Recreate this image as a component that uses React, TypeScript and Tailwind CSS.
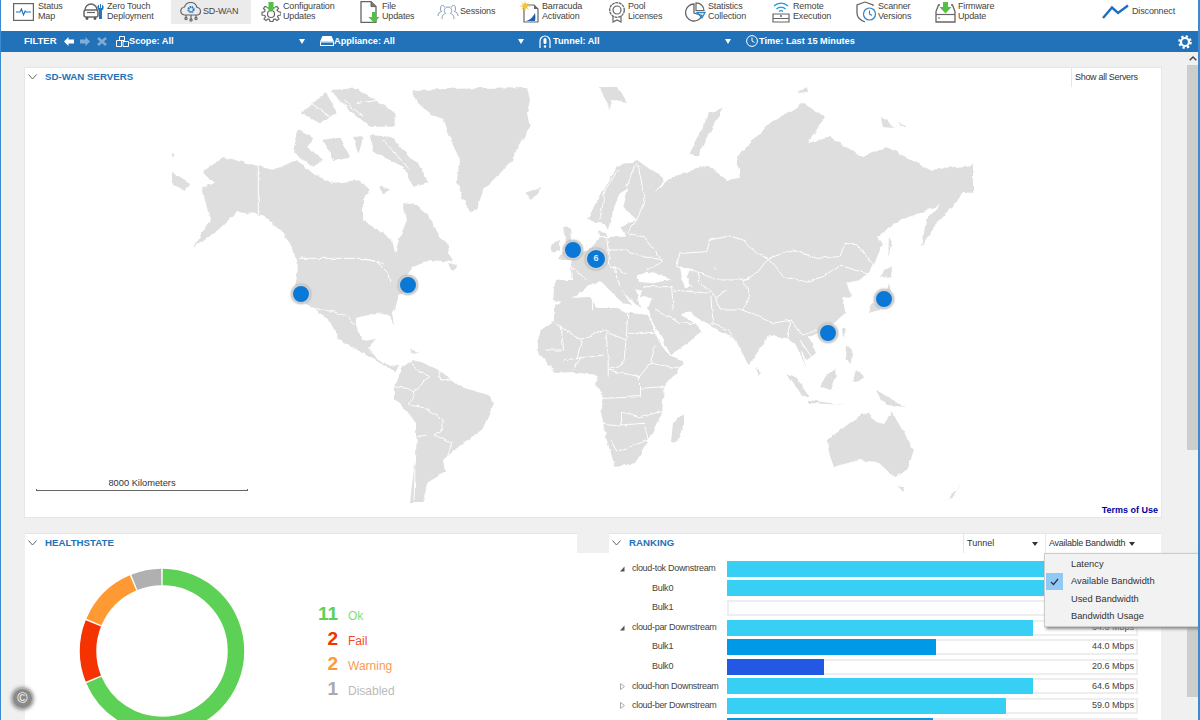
import type { ReactNode } from 'react';

/* ---------- toolbar icons ---------- */

const S = { fill: 'none', stroke: '#666', strokeWidth: 1.2 };

function StatusIcon() {
  return (
    <svg width="21" height="18" viewBox="0 0 21 18">
      <rect x="0.6" y="0.6" width="19.8" height="16.8" {...S} />
      <path d="M3 9h4l1.5-3 2 6 1.6-4 .9 1H18" fill="none" stroke="#2272b9" strokeWidth="1.1" />
    </svg>
  );
}

function RobotIcon() {
  return (
    <svg width="22" height="18" viewBox="0 0 22 18">
      <path d="M2 7a6 6 0 0 1 12 0" {...S} strokeWidth={1.5} />
      <rect x="1" y="7" width="14" height="7" rx="2" {...S} strokeWidth={1.5} />
      <path d="M4 9.5h8" {...S} />
      <circle cx="4" cy="15.5" r="1.4" fill="#555" />
      <circle cx="12" cy="15.5" r="1.4" fill="#555" />
      <path d="M17 1v4h-1V1.5a3.5 3.5 0 0 0 0 6V16h3V7.5a3.5 3.5 0 0 0 0-6V5h-1V1z" fill="#1f78c1" />
    </svg>
  );
}

function CloudIcon() {
  return (
    <svg width="24" height="20" viewBox="0 0 24 20">
      <path d="M6 13a4 4 0 0 1-.5-8A6.500 6.500 0 0 1 18 5.500 3.800 3.800 0 0 1 18.500 13z" {...S} />
      <circle cx="12" cy="7.500" r="2.600" fill="none" stroke="#1f78c1" strokeWidth="2" strokeDasharray="1.500 .6" />
      <circle cx="12" cy="7.500" r="1" fill="#ebebeb" />
      <path d="M12 13v4M7 13v2.500M17 13v2.500" {...S} />
      <circle cx="12" cy="18" r="1.100" {...S} />
      <circle cx="7" cy="16.500" r="1.100" {...S} />
      <circle cx="17" cy="16.500" r="1.100" {...S} />
    </svg>
  );
}

function ConfigIcon() {
  return (
    <svg width="20" height="20" viewBox="0 0 20 20">
      <path
        d="M6 5l-2-.5-1.500 2L4 8l-.2 1.500L1 10.500v2.500l2.800.5.700 1.500-1.500 2 2 1.500 2-1.500 1.500.5.500 2h3l.5-2 1.500-.5 2 1.500 2-1.500-1.500-2 .7-1.500 2.800-.5v-2.500l-2.800-1L16 8l1.500-1.500L16 4.500 14 5"
        {...S}
      />
      <circle cx="10" cy="12" r="3.500" {...S} />
      <path d="M7.500 0h5v5H15l-5 5-5-5h2.500z" fill="#4fc23f" />
    </svg>
  );
}

function FileIcon() {
  return (
    <svg width="20" height="22" viewBox="0 0 20 22">
      <path d="M1 .6h10l5 5v15.800H1z" {...S} strokeWidth={1.3} />
      <path d="M11 .6v5h5" fill="#777" stroke="#666" />
      <path d="M12 11h4v5h3.500L14 22l-5.500-6H12z" fill="#4fc23f" />
    </svg>
  );
}

function SessionsIcon() {
  return (
    <svg width="22" height="16" viewBox="0 0 22 16">
      <g fill="none" stroke="#7d9cb8" strokeWidth="1">
        <path d="M1 12c0-3 2-4 3.500-4.500C3 6 3 1.500 5.500 1.500c1.500 0 2 1 2.200 2" />
        <path d="M21 12c0-3-2-4-3.500-4.500C19 6 19 1.500 16.500 1.500c-1.500 0-2 1-2.200 2" />
        <path d="M5 15c0-4 2-5 3.500-5.500-2-2-1.500-6.500 2.500-6.500s4.500 4.500 2.500 6.500C15 10 17 11 17 15" />
      </g>
    </svg>
  );
}

function BarracudaIcon() {
  return (
    <svg width="22" height="22" viewBox="0 0 22 22">
      <path d="M5 4h10l4 4v13H5z" {...S} />
      <path d="M15 4v4h4" fill="#666" />
      <path d="M6 0v10M1 5h10M2.500 1.500l7 7M9.500 1.500l-7 7" stroke="#f5c33b" strokeWidth=".8" />
      <circle cx="6" cy="5" r="2.700" fill="#f5c33b" />
      <path d="M7 20c4-1 7-4 9-8 .5 3 .5 6 0 8z" fill="#1f5fb0" />
    </svg>
  );
}

function PoolIcon() {
  return (
    <svg width="18" height="21" viewBox="0 0 18 21">
      <circle cx="9" cy="8" r="7.300" fill="none" stroke="#666" strokeWidth="1.300" strokeDasharray="3 .6" />
      <circle cx="9" cy="8" r="4" {...S} />
      <path d="M5 14v6l4-2 4 2v-6" {...S} />
    </svg>
  );
}

function StatsIcon() {
  return (
    <svg width="21" height="20" viewBox="0 0 21 20">
      <path d="M9 2a8.500 8.500 0 1 0 8 11.500L9 11z" {...S} strokeWidth={1.3} />
      <path d="M11 .8a8 8 0 0 1 8 7.700h-8z" {...S} />
      <path d="M12 10.500h8l-3 5.500z" fill="none" stroke="#2b8ad0" strokeWidth="1.300" />
    </svg>
  );
}

function RemoteIcon() {
  return (
    <svg width="18" height="22" viewBox="0 0 18 22">
      <g fill="none" stroke="#1f9bd7" strokeWidth="1.300">
        <path d="M2 5a10 10 0 0 1 14 0" />
        <path d="M4.500 8a6.500 6.500 0 0 1 9 0" />
        <path d="M7 10.500a3 3 0 0 1 4 0" />
      </g>
      <path d="M1 13h16v8H1zM1 17.500h16" {...S} />
      <circle cx="9" cy="15" r="1" fill="#666" />
    </svg>
  );
}

function ScannerIcon() {
  return (
    <svg width="21" height="22" viewBox="0 0 21 22">
      <path d="M9 1L1 4v8c0 4 3 7 8 9" {...S} strokeWidth={1.3} />
      <path d="M9 1l8 3v1" {...S} strokeWidth={1.3} />
      <circle cx="13.500" cy="13" r="6" fill="#fff" stroke="#2b7fc4" strokeWidth="1.200" />
      <path d="M13.500 9.500V13l2.500 1.500" fill="none" stroke="#2b7fc4" strokeWidth="1.100" />
    </svg>
  );
}

function FirmwareIcon() {
  return (
    <svg width="21" height="21" viewBox="0 0 21 21">
      <path d="M5 3H3.500L1 9.500V20h19V9.500L17.500 3H16" {...S} strokeWidth={1.3} />
      <path d="M1 12.500h19" {...S} />
      <circle cx="4" cy="16" r=".8" fill="#555" />
      <path d="M8 0h5v5h3.500l-6 6.500-6-6.500H8z" fill="#4fc23f" />
    </svg>
  );
}

function DisconnectIcon() {
  return (
    <svg width="27" height="16" viewBox="0 0 27 16">
      <path d="M1 14L10 3.500 16 9 26 1.500" fill="none" stroke="#1f6fc0" strokeWidth="2.400" />
    </svg>
  );
}

interface ToolItem {
  cell: string;
  icon: ReactNode;
  lines: string[];
}

const tools: ToolItem[] = [
  { cell: 'w-[70px] gap-[4px]', icon: <StatusIcon />, lines: ['Status', 'Map'] },
  { cell: 'w-[88px] gap-[2px]', icon: <RobotIcon />, lines: ['Zero Touch', 'Deployment'] },
  { cell: 'w-[80px] pl-[8px] mr-[10px] bg-[#ebebeb]', icon: <CloudIcon />, lines: ['SD-WAN'] },
  { cell: 'w-[99px] gap-[2px]', icon: <ConfigIcon />, lines: ['Configuration', 'Updates'] },
  { cell: 'w-[77px] gap-[2px]', icon: <FileIcon />, lines: ['File', 'Updates'] },
  { cell: 'w-[82px] gap-[1px]', icon: <SessionsIcon />, lines: ['Sessions'] },
  { cell: 'w-[89px] gap-[1px]', icon: <BarracudaIcon />, lines: ['Barracuda', 'Activation'] },
  { cell: 'w-[77px] gap-[2px]', icon: <PoolIcon />, lines: ['Pool', 'Licenses'] },
  { cell: 'w-[87px] gap-[2px]', icon: <StatsIcon />, lines: ['Statistics', 'Collection'] },
  { cell: 'w-[84px] gap-[3px]', icon: <RemoteIcon />, lines: ['Remote', 'Execution'] },
  { cell: 'w-[79px] gap-[1px]', icon: <ScannerIcon />, lines: ['Scanner', 'Versions'] },
  { cell: 'w-[167px] gap-[2px]', icon: <FirmwareIcon />, lines: ['Firmware', 'Update'] },
  { cell: 'gap-[3px]', icon: <DisconnectIcon />, lines: ['Disconnect'] },
];

function Toolbar() {
  return (
    <div className="flex h-[31px] shrink-0 items-start bg-white pl-[12px]">
      {tools.map((tool) => (
        <div key={tool.lines[0]} className={`flex h-[24px] shrink-0 items-center ${tool.cell}`}>
          {tool.icon}
          <div className="-mt-[3px] text-[9px] leading-[10px] tracking-[-0.15px] text-[#444]">
            {tool.lines.map((line) => (
              <div key={line}>{line}</div>
            ))}
          </div>
        </div>
      ))}
    </div>
  );
}

/* ---------- filter bar ---------- */

function Caret() {
  return <div className="ml-auto h-0 w-0 border-x-[3px] border-t-[5px] border-x-transparent border-t-white" />;
}

function Gear() {
  return (
    <svg className="ml-auto mr-[6px]" width="14" height="14" viewBox="0 0 14 14" fill="none" stroke="#fff">
      <circle cx="7" cy="7" r="4" strokeWidth="2.200" />
      <circle cx="7" cy="7" r="5.700" strokeWidth="2.200" strokeDasharray="2.300 2.170" />
    </svg>
  );
}

function FilterBar() {
  return (
    <div className="flex h-[21px] shrink-0 items-center bg-[#2272b9] pl-[23px] text-[9.2px] font-bold text-white">
      <div className="w-[40px] text-[9.500px]">FILTER</div>
      <svg className="mr-[6px]" width="10" height="9" viewBox="0 0 10 9">
        <path d="M0 4.500L4.500 0v2.500H10v4H4.500V9z" fill="#fff" />
      </svg>
      <svg className="mr-[7px]" width="10" height="9" viewBox="0 0 10 9">
        <path d="M10 4.500L5.500 0v2.500H0v4h5.500V9z" fill="#7fadd6" />
      </svg>
      <svg className="mr-[9px]" width="10" height="9" viewBox="0 0 10 9">
        <path d="M1 1l8 7M9 1L1 8" stroke="#7fadd6" strokeWidth="2.400" />
      </svg>
      <div className="flex w-[204px] items-center pr-[15px]">
        <svg width="13" height="11" viewBox="0 0 13 11" fill="none" stroke="#fff">
          <path d="M3.500.5h5v4h-5zM.5 4.500h5v6h-5zM7 5.500h5.500v5H7z" />
        </svg>
        <span>Scope: All</span>
        <Caret />
      </div>
      <div className="flex w-[219px] items-center pr-[15px]">
        <svg width="14" height="10" viewBox="0 0 14 10">
          <path d="M2.500 0h9L14 5.500H0z" fill="#fff" />
          <rect x=".5" y="6" width="13" height="3.500" fill="none" stroke="#fff" />
        </svg>
        <span>Appliance: All</span>
        <Caret />
      </div>
      <div className="flex w-[207px] items-center pr-[15px]">
        <svg className="mr-[2px]" width="12" height="14" viewBox="0 0 12 14" fill="none" stroke="#fff" strokeWidth="1.200">
          <path d="M1 13V6a5 5 0 0 1 10 0v7" />
          <rect x="4.500" y="3" width="3" height="6" rx="1.500" fill="#fff" stroke="none" />
          <circle cx="6" cy="11.500" r="1.200" fill="#fff" stroke="none" />
        </svg>
        <span>Tunnel: All</span>
        <Caret />
      </div>
      <div className="flex items-center">
        <svg className="mr-[1px]" width="12" height="12" viewBox="0 0 12 12" fill="none" stroke="#fff">
          <circle cx="6" cy="6" r="5.400" />
          <path d="M6 2.500V6l2.500 1.500" />
        </svg>
        <span>Time: Last 15 Minutes</span>
      </div>
      <Gear />
    </div>
  );
}

/* ---------- world map, coordinates are page pixels unless a group says otherwise ---------- */

const LAND = '#dedede';

const land = [
  // North and Central America
  'M203 172L223 157 258 166 273 170 297 160 315 175 333 183 360 180 370 190 363 200 363 220 383 233 392 240 395 253 400 237 407 220 403 203 417 205 428 215 440 237 447 243 452 262 430 260 413 267 405 278 417 280 398 297 398 300 392 313 394 325 389 315 376 313 356 318 356 325 363 340 376 338 369 348 378 360 394 367 400 365 394 371 380 363 340 340 331 323 314 308 293 295 297 277 298 260 283 233 263 215 237 212 218 230 193 247 210 220 202 187 215 183z',
  'M448 263L458 265 452 272z',
  // South America
  'M412 360L403 367 394 387 394 397 416 423 416 453 410 502 423 502 427 483 445 472 443 460 463 443 483 428 494 403 488 395 461 387 439 370 421 362z',
  // Africa
  'M537 343L541 330 555 320 555 305 568 298 590 297 597 308 617 308 630 313 648 315 657 337 668 355 682 360 684 363 664 387 662 413 648 440 635 463 615 467 606 437 601 413 604 397 595 383 599 375 572 372 555 373 537 350z',
  // Madagascar
  'M684 413L673 423 671 442 677 442 684 423z',
  // Australia, Tasmania, New Zealand
  'M827 440L854 420 867 412 876 422 884 424 892 412 914 450 907 470 894 477 878 462 858 460 834 467 829 453z',
  'M898 487L904 487 902 492z',
  'M947 500L958 488 960 482 954 496z',
  // Greenland, Iceland
  'M412 90L527 87 530 100 527 113 530 127 520 143 512 160 500 173 483 190 477 210 470 212 462 197 457 180 460 160 452 143 443 120 430 113 417 103z',
  'M525 193L540 187 538 195 530 199z',
  // Eurasia
  'M587 220L602 193 617 167 637 160 665 180 653 193 673 177 707 165 727 180 740 178 737 157 770 123 803 103 825 117 808 143 830 137 863 157 887 147 930 170 973 165 973 193 963 192 953 207 935 225 922 247 926 220 940 205 915 215 900 220 877 237 883 243 873 267 860 280 846 283 852 297 843 298 845 313 827 330 809 337 816 353 807 360 800 350 808 372 796 345 789 340 769 335 749 365 733 337 712 327 690 312 681 314 695 324 702 332 671 355 653 323 648 308 652 298 640 297 642 290 636 288 640 308 625 295 617 285 632 305 622 303 600 280 590 285 577 295 565 303 553 300 555 280 573 280 570 268 572 260 590 248 600 237 598 225z',
  // UK, Ireland
  'M563 227L570 228 573 260 558 260 567 247z',
  'M553 243L560 240 560 250 551 252z',
  // Sakhalin, Japan
  'M889 238L892 240 888 258z',
  'M884 270L892 266 891 278 881 277z',
  'M889 284L892 296 880 310 868 313 870 306 885 298z',
  // South East Asia
  'M787 373L797 378 809 397 803 397z',
  'M820 387L831 390 836 377 835 368 827 375z',
  'M809 400L845 405 809 403z',
  'M876 390L905 407 887 405 880 398z',
  'M847 345L852 350 851 365 846 358z',
  'M856 370L864 378 853 382z',
  'M757 367L761 373 757 376z',
  'M842 328L846 330 843 338z',
  // Caribbean
  'M384 343L405 347 395 345z',
  'M411 350L421 352 411 353z',
  // Svalbard, Novaya Zemlya, Arctic Russia
  'M600 87L618 87 627 102 612 100 610 110z',
  'M723 108L710 112 690 153 697 157 707 137z',
  'M797 93L807 87 808 92z',
  'M880 118L888 120 894 128 882 127z',
  'M898 123L908 127 901 127z',
  // Aleutian side of Chukotka
  'M172 172L190 183 186 190 172 185z',
  'M172 153L176 155 172 157z',
];

// Canadian Arctic, drawn in the scale of a 3x crop of (150,80)
const arctic = [
  'M455 100L500 60 530 40 560 100 510 130z',
  'M540 30L620 25 740 100 730 140 660 140 600 90z',
  'M430 210L445 150 490 175 470 200 520 240 490 260 450 235z',
  'M520 180L570 170 600 230 550 240z',
  'M610 170L640 170 625 225z',
  'M660 165L720 170 810 260 835 310 790 320 760 260 700 230 670 210z',
  'M690 175L700 225 720 230 700 190z',
  'M690 320L720 325 700 345z',
];

// white channels through the Arctic islands, same scale
const channels = [
  'M470 60L540 110 520 150',
  'M580 60L640 110',
  'M620 70L690 60',
  'M700 180L780 270',
  'M480 270L550 300 620 280',
  'M560 260L545 315',
  'M640 350L680 330 700 360',
];

// borders in the scale of the (150,80) crop
const naBorders = ['M325 258V405', 'M450 535H630L680 545 715 580 720 605', 'M640 535L700 550'];

// borders in the scale of the (530,80) crop
const asiaBorders = [
  'M450 520L530 515 540 480 600 468 640 480 680 520 715 535',
  'M715 535L790 510 860 535 930 530 945 490 985 495 1030 550 1020 585 930 555 880 590 830 605 760 590 735 560 715 535',
  'M715 535L680 580 640 600 660 650 640 690',
  'M450 520L440 560 500 575 560 600 610 600 660 595',
  'M505 575L510 610 560 650 590 630',
  'M265 270L225 330 210 420',
  'M320 250L290 320',
  'M325 255L345 365 320 420',
  'M320 420L290 460 340 470 400 545 350 570',
  'M230 510L290 510 340 530 400 540',
  'M230 470L240 560 290 580',
  'M340 620L430 620',
  'M425 620L430 690',
  'M560 650L570 690 620 690',
  'M430 630L540 640',
  'M130 590L125 560 170 600',
  'M250 560L270 620',
  'M180 470L240 470',
];

const asiaCuts = [
  'M320 590L350 575 400 585 420 600 370 610 325 605z',
  'M450 555L480 570 470 590 485 620 465 625 455 590z',
  'M230 470L245 400 270 340 295 325 280 380 320 420 270 440 290 470z',
  'M553 562L558 565 554 570z',
  'M170 420L225 430 240 470 190 440z',
];

// borders in the scale of the (260,280) crop, which is stretched 2.24 by 3
const southBorders = [
  'M120 85L165 95 195 110 215 135',
  'M340 240L345 265 380 290 345 335 335 375 375 385 410 420 410 445 390 465 430 490 420 530',
  'M300 320L330 325 345 335',
  'M350 470L345 660',
  'M370 465L355 470',
  'M400 265L405 300 440 295 445 320',
  'M660 130L720 180 765 150 820 180 825 75',
  'M825 160H890',
  'M720 180L710 240',
  'M640 210H680L675 140',
  'M680 240L770 225',
  'M775 160L780 225 780 290',
  'M820 180L815 250 780 270 850 290 850 350 770 355',
  'M885 195L875 250 850 290',
  'M875 250L940 265',
  'M905 320L850 325',
  'M765 430L810 435 860 430 870 480 800 515 785 480',
  'M810 435V395L850 410 900 395',
  'M640 250L660 270',
  'M720 230L700 270',
  'M1070 85L1100 100 1150 130 1190 120 1180 175',
  'M1190 120L1215 165 1250 150',
  'M1210 180L1235 230',
  'M885 90L940 130 1000 130',
  'M1010 130L1050 150 1060 170',
  'M1010 50L1015 130',
  'M745 50V90',
];

function WorldMap() {
  return (
    <svg className="block" width="1136" height="430" viewBox="25 87 1136 430">
      <defs>
        {/* roughens the hand-placed coastlines */}
        <filter id="coast" x="25" y="87" width="1136" height="430" filterUnits="userSpaceOnUse">
          <feTurbulence type="fractalNoise" baseFrequency="0.14" numOctaves="2" seed="4" result="noise" />
          <feDisplacementMap in="SourceGraphic" in2="noise" scale="4" xChannelSelector="R" yChannelSelector="G" />
          <feGaussianBlur stdDeviation="0.3" />
        </filter>
      </defs>
      <g filter="url(#coast)">
        <rect x="25" y="87" width="1136" height="430" fill="#fff" />
        <g fill={LAND}>
          {land.map((d) => (
            <path key={d} d={d} />
          ))}
          <g transform="translate(150 80) scale(.3333)">
            {arctic.map((d) => (
              <path key={d} d={d} />
            ))}
          </g>
        </g>
        <g fill="#fff" transform="translate(530 80) scale(.3333)">
          {asiaCuts.map((d) => (
            <path key={d} d={d} />
          ))}
        </g>
        <g fill="none" stroke="#fff" strokeWidth="1">
          <g transform="translate(150 80) scale(.3333)">
            {channels.concat(naBorders).map((d) => (
              <path key={d} d={d} vectorEffect="non-scaling-stroke" />
            ))}
          </g>
          <g transform="translate(530 80) scale(.3333)">
            {asiaBorders.map((d) => (
              <path key={d} d={d} vectorEffect="non-scaling-stroke" />
            ))}
          </g>
          <g transform="translate(260 280) scale(.4464 .3333)">
            {southBorders.map((d) => (
              <path key={d} d={d} vectorEffect="non-scaling-stroke" />
            ))}
          </g>
        </g>
      </g>
    </svg>
  );
}

const pins = [
  'left-[266px] top-[197px] h-[20px] w-[20px]',
  'left-[373px] top-[188px] h-[20px] w-[20px]',
  'left-[538px] top-[153px] h-[20px] w-[20px]',
  'left-[793px] top-[236px] h-[20px] w-[20px]',
  'left-[849px] top-[202px] h-[20px] w-[20px]',
];

function Chevron() {
  return (
    <svg className="ml-[3px] mr-[8px]" width="9" height="6" viewBox="0 0 9 6">
      <path d="M.5.5l4 4.500 4-4.500" fill="none" stroke="#666" strokeWidth="1" />
    </svg>
  );
}

function PanelTitle({ children }: { children: ReactNode }) {
  return (
    <div className="flex items-center text-[9.700px] font-bold text-[#2272b9]">
      <Chevron />
      {children}
    </div>
  );
}

function MapPanel() {
  return (
    <section className="h-[449px] w-[1136px] shrink-0 bg-white shadow-[0_0_0_1px_#e6e6e6]">
      <div className="flex h-[19px] items-center justify-between">
        <PanelTitle>SD-WAN SERVERS</PanelTitle>
        <div className="flex h-full w-[90px] items-center border-l border-[#e6e6e6] pl-[3px] text-[9px] tracking-[-0.3px] text-[#333]">
          Show all Servers
        </div>
      </div>
      <div className="relative">
        <WorldMap />
        {pins.map((pin) => (
          <div
            key={pin}
            className={`absolute rounded-full border-[2px] border-[#cfcfcf] bg-[#0a78d6] shadow-[0_0_2px_#999] ${pin}`}
          />
        ))}
        <div className="absolute left-[560px] top-[161px] flex h-[22px] w-[22px] items-center justify-center rounded-full border-[2px] border-[#cfcfcf] bg-[#0a78d6] text-[9px] font-bold text-[#dcecff] shadow-[0_0_2px_#999]">
          6
        </div>
        <div className="absolute left-[11px] top-[390px] w-[212px] text-center text-[9.300px] leading-[12px] text-[#333]">
          8000 Kilometers
          <div className="h-[2px] border-x border-b border-[#666]" />
        </div>
        <div className="absolute right-[3px] top-[417px] text-[9px] font-bold leading-[12px] text-[#0000a0]">
          Terms of Use
        </div>
      </div>
    </section>
  );
}

/* ---------- healthstate ---------- */

const health = [
  { n: '11', label: 'Ok', num: 'text-[#5cd155]', text: 'text-[#7fe07a]' },
  { n: '2', label: 'Fail', num: 'text-[#f53300]', text: 'text-[#f54a2a]' },
  { n: '2', label: 'Warning', num: 'text-[#ff9933]', text: 'text-[#ff9a4d]' },
  { n: '1', label: 'Disabled', num: 'text-[#aaaaaa]', text: 'text-[#bbbbbb]' },
];

const slices = [
  { color: '#5cd155', from: 0, to: 11 },
  { color: '#f53300', from: 11, to: 13 },
  { color: '#ff9933', from: 13, to: 15 },
  { color: '#b0b0b0', from: 15, to: 16 },
];

function Donut() {
  return (
    <svg width="168" height="168" viewBox="0 0 168 168" className="-rotate-90">
      {slices.map((s) => (
        <circle
          key={s.color}
          cx="84"
          cy="84"
          r="74"
          fill="none"
          stroke={s.color}
          strokeWidth="16.500"
          pathLength={1600}
          strokeDasharray={`${(s.to - s.from) * 100 - 5} ${1600 - (s.to - s.from) * 100 + 5}`}
          strokeDashoffset={-s.from * 100 - 2.5}
        />
      ))}
    </svg>
  );
}

function HealthBody() {
  return (
    <div className="flex w-[552px] shrink-0 items-start pl-[53px] pt-[14px]">
      <Donut />
      <div className="ml-[69px] mt-[34px]">
        {health.map((h) => (
          <div key={h.label} className="flex h-[25px] items-center">
            <span className={`w-[23px] text-right text-[19px] font-bold leading-none ${h.num}`}>{h.n}</span>
            <span className={`ml-[10px] mt-[4px] text-[12px] ${h.text}`}>{h.label}</span>
          </div>
        ))}
      </div>
    </div>
  );
}

/* ---------- ranking ---------- */

interface RankRow {
  label: string;
  kind: 'open' | 'closed' | 'child';
  fill: string;
  value: string;
}

const CYAN = 'bg-[#38cff5]';

const rows: RankRow[] = [
  { label: 'cloud-tok Downstream', kind: 'open', fill: `w-[409px] ${CYAN}`, value: '' },
  { label: 'Bulk 0', kind: 'child', fill: `w-[409px] ${CYAN}`, value: '' },
  { label: 'Bulk 1', kind: 'child', fill: 'w-0', value: '' },
  { label: 'cloud-par Downstream', kind: 'open', fill: `w-[306px] ${CYAN}`, value: '64.6 Mbps' },
  { label: 'Bulk 1', kind: 'child', fill: 'w-[209px] bg-[#0099e8]', value: '44.0 Mbps' },
  { label: 'Bulk 0', kind: 'child', fill: 'w-[97px] bg-[#2258e4]', value: '20.6 Mbps' },
  { label: 'cloud-hon Downstream', kind: 'closed', fill: `w-[306px] ${CYAN}`, value: '64.6 Mbps' },
  { label: 'cloud-ber Downstream', kind: 'closed', fill: `w-[279px] ${CYAN}`, value: '59.0 Mbps' },
  { label: '', kind: 'child', fill: 'w-[206px] bg-[#0099e8]', value: '' },
];

function Arrow({ kind }: { kind: RankRow['kind'] }) {
  if (kind === 'child') return <div className="w-[33px]" />;
  return (
    <svg className="ml-[11px] mr-[7px]" width="5" height="7" viewBox="0 0 5 7">
      {kind === 'open' ? (
        <path d="M4.500 1.500v5h-4.500z" fill="#555" />
      ) : (
        <path d="M.5.5l4 3-4 3z" fill="none" stroke="#aaa" />
      )}
    </svg>
  );
}

const menuItems = ['Latency', 'Available Bandwidth', 'Used Bandwidth', 'Bandwidth Usage'];

function RankBody() {
  return (
    <div className="relative w-[552px] shrink-0 pt-[6px] text-[9px] text-[#444]">
      {rows.map((row, idx) => (
        <div key={idx} className="flex h-[19.600px] items-center">
          <div className={`flex w-[118px] shrink-0 items-center ${row.kind === 'child' ? 'pl-[10px] [word-spacing:-2px]' : ''}`}>
            <Arrow kind={row.kind} />
            <span className="whitespace-nowrap tracking-[-0.3px]">{row.label}</span>
          </div>
          <div className="flex h-[16px] w-[411px] shrink-0 items-center justify-between border-[2px] border-[#eeeeee] bg-white pr-[2px]">
            <div className={`-my-[2px] -ml-[2px] h-[16px] ${row.fill}`} />
            <span>{row.value}</span>
          </div>
        </div>
      ))}
      <div className="absolute left-[435px] top-0 h-[74px] w-[155px] border border-[#cccccc] bg-[#f2f2f2] py-[2px] shadow-[2px_2px_3px_#888]">
        {menuItems.map((item) => (
          <div key={item} className="relative h-[17.300px] pl-[26px] text-[9.300px] leading-[17px] text-[#333]">
            {item === 'Available Bandwidth' && (
              <div className="absolute left-[1px] top-0 flex h-[17px] w-[17px] items-center justify-center bg-[#90c8f6]">
                <svg width="9" height="8" viewBox="0 0 9 8">
                  <path d="M1 4l2.500 2.500L8 1" fill="none" stroke="#333" strokeWidth="1.200" />
                </svg>
              </div>
            )}
            {item}
          </div>
        ))}
      </div>
    </div>
  );
}

function SmallCaret() {
  return <div className="h-0 w-0 border-x-[3px] border-t-[4px] border-x-transparent border-t-[#333]" />;
}

function LowerPanels() {
  return (
    <section className="mt-[17px] w-[1136px] shrink-0">
      <div className="flex h-[19px] gap-[32px]">
        <div className="flex w-[552px] items-center bg-white shadow-[0_-1px_0_#e6e6e6]">
          <PanelTitle>HEALTHSTATE</PanelTitle>
        </div>
        <div className="flex w-[552px] items-center bg-white shadow-[0_-1px_0_#e6e6e6]">
          <PanelTitle>RANKING</PanelTitle>
          <div className="ml-auto flex h-full w-[83px] items-center justify-between border-x border-[#e6e6e6] pl-[3px] pr-[7px] text-[9px] text-[#333]">
            Tunnel
            <SmallCaret />
          </div>
          <div className="flex h-full w-[115px] items-center gap-[4px] pl-[3px] text-[9px] tracking-[-0.25px] text-[#333]">
            Available Bandwidth
            <SmallCaret />
          </div>
        </div>
      </div>
      <div className="flex gap-[32px] bg-white">
        <HealthBody />
        <RankBody />
      </div>
    </section>
  );
}

function Scrollbar() {
  return (
    <div className="ml-[26px] w-[11px] shrink-0">
      <div className="flex h-[13px] items-center justify-center">
        <svg width="8" height="5" viewBox="0 0 8 5">
          <path d="M.7 4.300L4 1l3.300 3.300" fill="none" stroke="#444" strokeWidth="1.400" />
        </svg>
      </div>
      <div className="h-[385px] bg-[#cdcdcd]" />
      <div className="h-[103px]" />
      <div className="h-[144px] bg-[#cdcdcd]" />
    </div>
  );
}

export default function App() {
  return (
    <div className="relative flex h-[720px] w-[1200px] flex-col overflow-hidden border-l border-r-2 border-[#3d8ad0] bg-[#f0f0f0] font-['Liberation_Sans',Arial,sans-serif]">
      <Toolbar />
      <FilterBar />
      <main className="flex flex-1 pl-[24px]">
        <div className="flex flex-col pt-[16px]">
          <MapPanel />
          <LowerPanels />
        </div>
        <Scrollbar />
      </main>
      <div className="absolute left-[11px] top-[688px] flex h-[21px] w-[21px] items-center justify-center rounded-full border border-[#bbb] bg-[#8a8a8a] text-[14px] text-white shadow-[0_0_4px_#555]">
        ©
      </div>
    </div>
  );
}
